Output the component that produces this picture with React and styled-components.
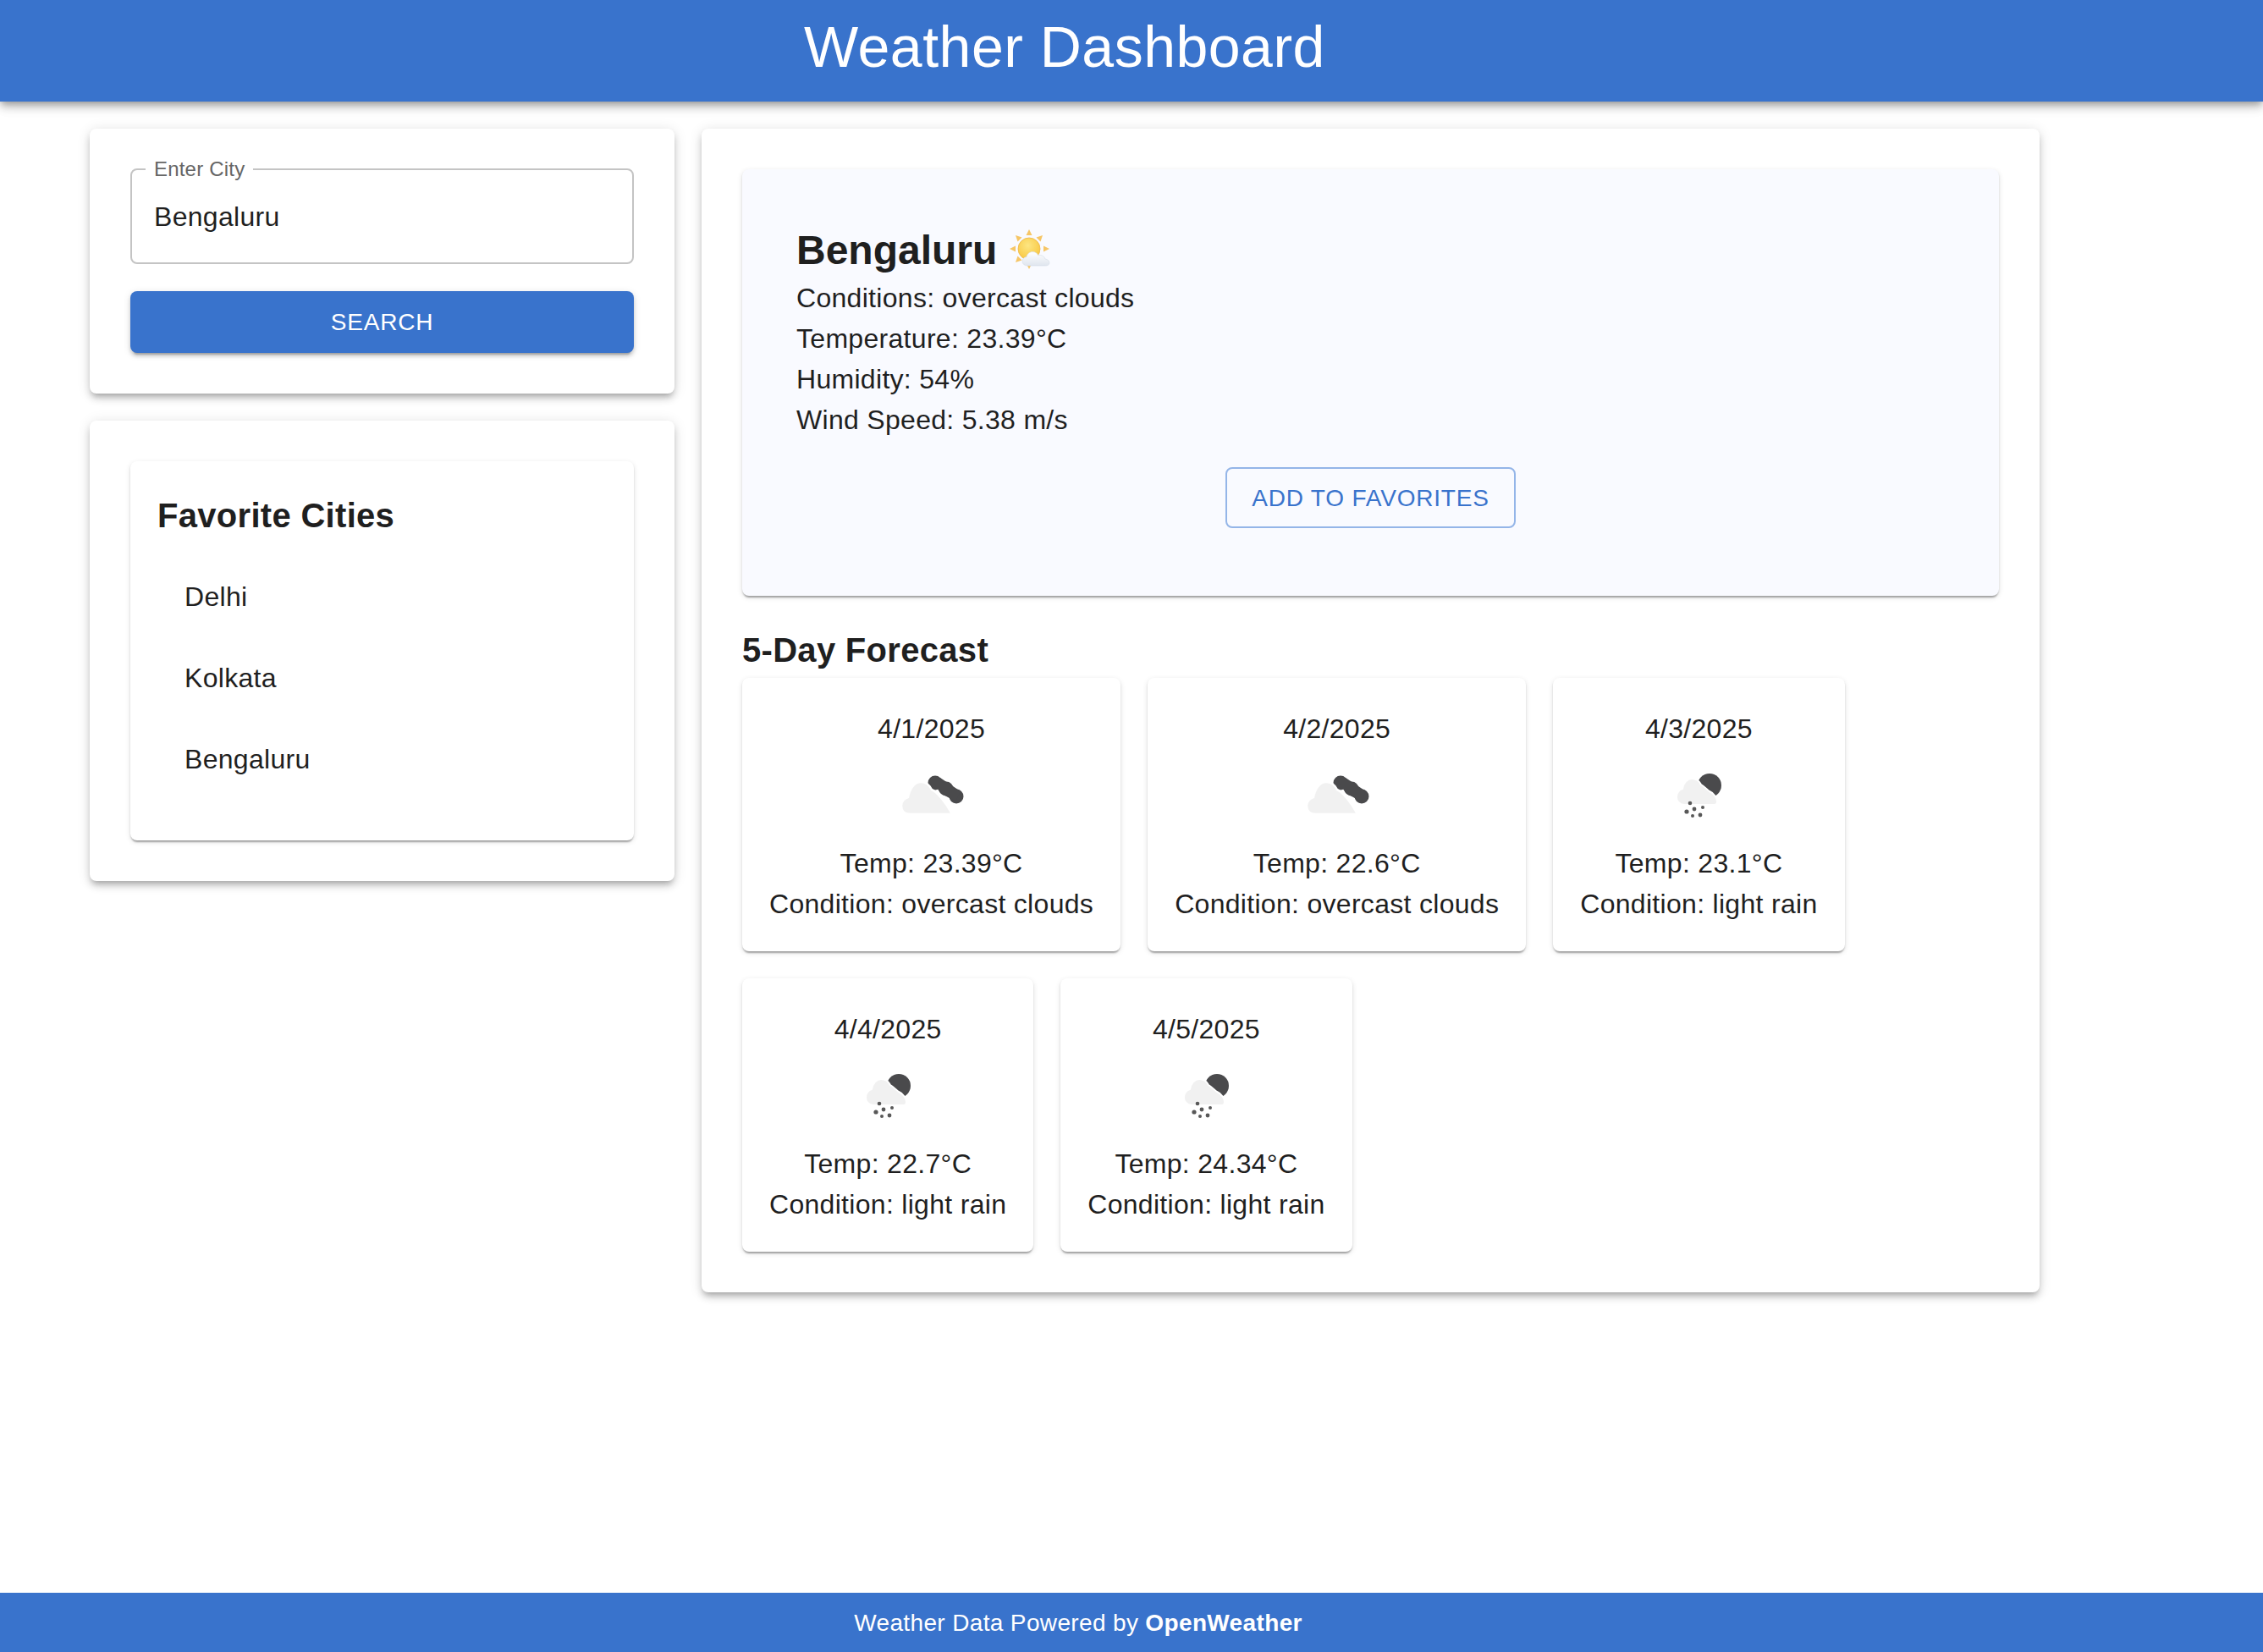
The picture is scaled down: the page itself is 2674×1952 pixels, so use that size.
import React from "react";
import styled, { createGlobalStyle } from "styled-components";

const Global = createGlobalStyle`
  html, body { margin: 0; padding: 0; background: #fff; }
  body { font-family: "Liberation Sans", Arial, sans-serif; color: #1f1f1f; }
  * { box-sizing: border-box; }
`;
const BLUE = "#3973cc";
const elev3 = "0 6px 6px -4px rgba(0,0,0,.2), 0 6px 8px 0 rgba(0,0,0,.14), 0 2px 16px 0 rgba(0,0,0,.12)";
const elev1 = "0 4px 2px -2px rgba(0,0,0,.2), 0 2px 2px 0 rgba(0,0,0,.14), 0 2px 6px 0 rgba(0,0,0,.12)";

const Page = styled.div`min-height: 1952px; display: flex; flex-direction: column;`;
const Header = styled.header`
  height: 120px; background: ${BLUE}; color: #fff; display: flex; align-items: center; justify-content: center;
  padding: 0 158px 10px 0; box-shadow: 0 4px 8px -2px rgba(0,0,0,.3), 0 8px 10px 0 rgba(0,0,0,.14), 0 2px 20px 0 rgba(0,0,0,.08);
  position: relative; z-index: 2;
`;
const Title = styled.h1`margin: 0; font-weight: 400; font-size: 68px; line-height: 1.1; letter-spacing: 0.5px;`;
const Main = styled.main`
  flex: 1; display: grid; grid-template-columns: 691px 1581px; gap: 32px; align-items: start; padding: 32px 0 0 106px;
`;
const Col = styled.div`display: flex; flex-direction: column; gap: 32px;`;
const Paper = styled.section`background: #fff; border-radius: 8px; padding: 48px; box-shadow: ${elev3};`;
const Field = styled.fieldset`
  margin: -10px 0 32px; padding: 0 16px; height: 122px; border: 2px solid #c4c4c4; border-radius: 8px;
  legend { font-size: 24px; line-height: 20px; color: #666; padding: 0 10px; margin: 0; letter-spacing: .2px; }
`;
const FieldValue = styled.div`font-size: 32px; line-height: 48px; color: #1f1f1f; letter-spacing: .3px; padding: 22px 10px 0;`;
const PrimaryButton = styled.button`
  display: block; width: 100%; height: 73px; border: 0; border-radius: 8px; background: ${BLUE}; color: #fff; font: inherit;
  font-size: 28px; letter-spacing: .8px; box-shadow: 0 6px 2px -4px rgba(0,0,0,.2), 0 4px 4px 0 rgba(0,0,0,.14), 0 2px 10px 0 rgba(0,0,0,.12);
`;
const SubCard = styled.div`background: ${p => p.$tint ? "#f9faff" : "#fff"}; border-radius: 8px; box-shadow: ${elev1}; padding: ${p => p.$pad}px;`;
const H5 = styled.h2`margin: 0; font-size: 40px; font-weight: 700; line-height: 64px; letter-spacing: .3px;`;
const List = styled.ul`list-style: none; margin: 0; padding: 16px 0;`;
const Item = styled.li`font-size: 32px; line-height: 48px; padding: 24px 32px; letter-spacing: .3px;`;
const CityName = styled.h2`margin: 0; font-size: 48px; font-weight: 700; line-height: 64px; display: flex; align-items: center; gap: 15px;`;
const Info = styled.p`margin: 0; font-size: 32px; line-height: 48px; letter-spacing: .3px;`;
const OutlineRow = styled.div`display: flex; justify-content: center; margin: 32px 0 16px;`;
const OutlineButton = styled.button`
  height: 72px; width: 343px; padding: 2px 0 0; border: 2px solid #94b5e8; border-radius: 8px; background: transparent; color: ${BLUE}; font: inherit;
  font-size: 28px; letter-spacing: .8px;
`;
const ForecastTitle = styled.h3`margin: 32px 0 0; font-size: 40px; font-weight: 700; line-height: 65px; letter-spacing: .3px;`;
const Forecast = styled.div`display: flex; flex-wrap: wrap; gap: 32px;`;
const DayCard = styled.article`
  background: #fff; border-radius: 8px; box-shadow: ${elev1}; padding: 32px; text-align: center; font-size: 32px; line-height: 48px; letter-spacing: .3px;
`;
const DateLine = styled.div`padding-top: 4px;`;
const IconSlot = styled.div`height: 115px; margin-top: -4px; padding-top: 2px; display: flex; justify-content: center; align-items: flex-start;`;
const Line = styled.div``;
const Footer = styled.footer`
  height: 70px; background: ${BLUE}; color: #fff; display: flex; align-items: center; justify-content: center; gap: 8px; padding: 2px 126px 0 0;
  font-size: 28px; letter-spacing: .36px;
  b { font-weight: 700; }
`;
const Emoji = styled.svg`margin-top: -1px;`;

const SunCloud = () => (
  <Emoji width="50" height="50" viewBox="0 0 50 50" aria-hidden="true">
    <defs>
      <radialGradient id="sun" cx=".45" cy=".35" r=".7"><stop offset="0" stopColor="#fde682" /><stop offset="1" stopColor="#f8c63e" /></radialGradient>
      <linearGradient id="cl" x1="0" y1="0" x2="0" y2="1"><stop offset="0" stopColor="#fff" /><stop offset="1" stopColor="#dfe5ee" /></linearGradient>
    </defs>
    <g fill="#f6c667">
      <path d="M23 0l3.500 7h-7z" /><path d="M23 47l3.500-7h-7z" /><path d="M0 23l7-3.500v7z" /><path d="M47 23l-7-3.500v7z" />
      <path d="M7 7l7.500 2.500-5 5z" /><path d="M39 7l-7.500 2.500 5 5z" /><path d="M7 39l7.500-2.500-5-5z" />
    </g>
    <circle cx="23" cy="23" r="13" fill="url(#sun)" stroke="#eeb64a" strokeWidth=".8" />
    <path d="M21 43c-3.600 0-6-2.400-6-5.200 0-2.800 2.200-5 5-5.200.6-3.600 3.600-6 7.200-6 3 0 5.600 1.600 6.600 4.200 1-.4 2-.4 3-.2 3 .4 4.800 2.600 5.200 4.400 3 .4 5 2.200 5 4.600 0 2.400-2.200 3.400-5 3.400z" fill="url(#cl)" stroke="#d4dbe6" strokeWidth=".6" />
  </Emoji>
);

const Blur = styled.svg`filter: blur(.5px);`;
const CloudIcon = () => (
  <Blur width="100" height="100" viewBox="0 0 100 100" aria-hidden="true">
    <g fill="#4a4a4c">
      <circle cx="54" cy="42" r="8.500" /><circle cx="67" cy="49" r="8.500" /><circle cx="79" cy="58" r="8.500" />
      <path d="M50 38 L60 36 L84 52 L78 64 L60 54z" />
    </g>
    <path d="M25 79C17 79 14 74 14 69C14 64 18 60 22 59C24 48 30 41 37 41C43 41 47 44 50 50C57 53 67 66 74 79Z" fill="#f1f1f1" stroke="#fff" strokeWidth="2.500" />
  </Blur>
);
const RainIcon = () => (
  <Blur width="100" height="100" viewBox="0 0 100 100" aria-hidden="true">
    <circle cx="63" cy="45" r="14" fill="#4a4a4c" />
    <path d="M33 68C27 68 24 63 24 59C24 54 27 50 31 49C32 42 37 37 42 37C48 37 51 40 53 44C58 47 60 50 63 52C68 54 72 60 72 64C72 66 71 68 69 68Z" fill="#f1f1f1" stroke="#fff" strokeWidth="2" />
    <g fill="#585858">
      <circle cx="40" cy="66" r="2.300" /><circle cx="36" cy="76" r="2.600" /><circle cx="45" cy="73" r="2.400" /><circle cx="55" cy="71" r="2" /><circle cx="43" cy="81" r="2" /><circle cx="52" cy="80" r="2.400" />
    </g>
  </Blur>
);

const days = [
  { d: "4/1/2025", t: "23.39", c: "overcast clouds", I: CloudIcon },
  { d: "4/2/2025", t: "22.6", c: "overcast clouds", I: CloudIcon },
  { d: "4/3/2025", t: "23.1", c: "light rain", I: RainIcon },
  { d: "4/4/2025", t: "22.7", c: "light rain", I: RainIcon },
  { d: "4/5/2025", t: "24.34", c: "light rain", I: RainIcon },
];

export default function App() {
  return (
    <Page>
      <Global />
      <Header><Title>Weather Dashboard</Title></Header>
      <Main>
        <Col>
          <Paper>
            <Field><legend>Enter City</legend><FieldValue>Bengaluru</FieldValue></Field>
            <PrimaryButton>SEARCH</PrimaryButton>
          </Paper>
          <Paper>
            <SubCard $pad={32}>
              <H5>Favorite Cities</H5>
              <List>
                <Item>Delhi</Item><Item>Kolkata</Item><Item>Bengaluru</Item>
              </List>
            </SubCard>
          </Paper>
        </Col>
        <Paper>
          <SubCard $tint $pad={64}>
            <CityName>Bengaluru <SunCloud /></CityName>
            <Info>Conditions: overcast clouds</Info>
            <Info>Temperature: 23.39°C</Info>
            <Info>Humidity: 54%</Info>
            <Info>Wind Speed: 5.38 m/s</Info>
            <OutlineRow><OutlineButton>ADD TO FAVORITES</OutlineButton></OutlineRow>
          </SubCard>
          <ForecastTitle>5-Day Forecast</ForecastTitle>
          <Forecast>
            {days.map(({ d, t, c, I }) => (
              <DayCard key={d}>
                <DateLine>{d}</DateLine>
                <IconSlot><I /></IconSlot>
                <Line>Temp: {t}°C</Line>
                <Line>Condition: {c}</Line>
              </DayCard>
            ))}
          </Forecast>
        </Paper>
      </Main>
      <Footer><span>Weather Data Powered by</span><b>OpenWeather</b></Footer>
    </Page>
  );
}
